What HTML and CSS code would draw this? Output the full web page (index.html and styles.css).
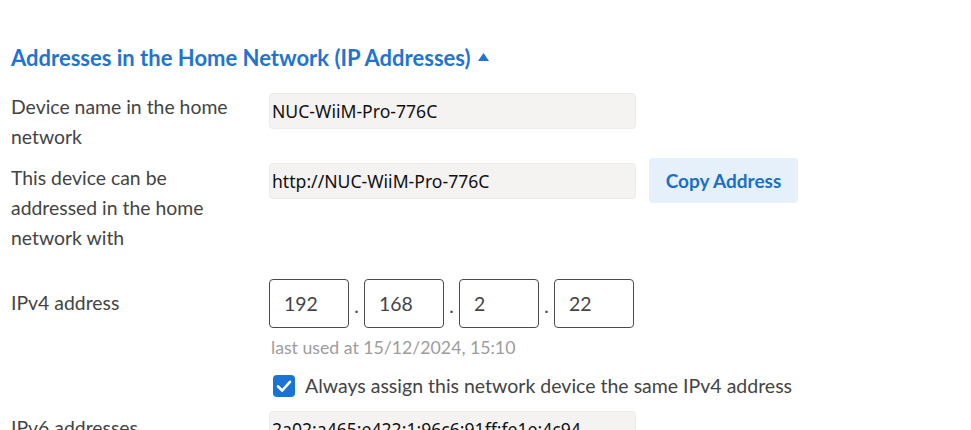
FILE: index.html
```html
<!DOCTYPE html>
<html lang="en">
<head>
<meta charset="utf-8">
<title>Addresses in the Home Network</title>
<link rel="stylesheet" href="styles.css">
</head>
<body>
<main class="page">
  <h2 class="section-title">Addresses in the Home Network (IP Addresses)<svg class="caret" width="11" height="8" viewBox="0 0 11 8"><path d="M0 8 L5.5 0 L11 8 Z" fill="#1f74cf"/></svg></h2>

  <div class="row row-name">
    <div class="label">Device name in the home network</div>
    <div class="field">
      <div class="text-input">NUC-WiiM-Pro-776C</div>
    </div>
  </div>

  <div class="row row-url">
    <div class="label">This device can be addressed in the home network with</div>
    <div class="field field-with-button">
      <div class="text-input">http://NUC-WiiM-Pro-776C</div>
      <button class="btn-secondary">Copy Address</button>
    </div>
  </div>

  <div class="row row-ipv4">
    <div class="label">IPv4 address</div>
    <div class="field">
      <div class="ip-group">
        <div class="ip-box">192</div><span class="ip-dot">.</span>
        <div class="ip-box">168</div><span class="ip-dot">.</span>
        <div class="ip-box">2</div><span class="ip-dot">.</span>
        <div class="ip-box">22</div>
      </div>
      <div class="hint">last used at 15/12/2024, 15:10</div>
      <label class="check">
        <span class="checkbox"><svg width="22" height="22" viewBox="0 0 22 22"><path d="M5 11.5 L9.2 15.5 L17 6.8" fill="none" stroke="#fff" stroke-width="2.6" stroke-linecap="round" stroke-linejoin="round"/></svg></span>
        <span class="check-text">Always assign this network device the same IPv4 address</span>
      </label>
    </div>
  </div>

  <div class="row row-ipv6">
    <div class="label">IPv6 addresses</div>
    <div class="field">
      <div class="text-input">2a02:a465:e422:1:96c6:91ff:fe1e:4c94</div>
    </div>
  </div>
</main>
</body>
</html>
```

FILE: styles.css
```css
html, body {
  margin: 0;
  padding: 0;
  background: #ffffff;
  overflow: hidden;
}

body {
  font-family: "Lato", "Noto Sans", sans-serif;
  color: #444444;
  height: 430px;
}

.page {
  padding: 0 0 0 11px;
}

.section-title {
  margin: 0;
  padding-top: 43px;
  height: 29px;
  font-size: 22px;
  line-height: 29px;
  font-weight: 700;
  color: #1f74cf;
  display: flex;
  align-items: center;
  gap: 7px;
}

.caret {
  margin-top: -2px;
}

.row {
  display: flex;
  align-items: flex-start;
}

.label {
  width: 258px;
  flex: none;
  font-size: 19.4px;
  line-height: 30px;
  color: #444444;
  padding-right: 20px;
  box-sizing: border-box;
}

.field {
  display: flex;
  flex-direction: column;
}

.text-input {
  width: 367px;
  height: 36px;
  box-sizing: border-box;
  background: #f4f3f1;
  border: 1px solid #ecebe8;
  border-radius: 4px;
  padding: 0 0 0 2px;
  font-family: "Noto Sans", "Open Sans", sans-serif;
  font-size: 17.6px;
  line-height: 34px;
  color: #111111;
  white-space: nowrap;
  overflow: hidden;
}

.row-name {
  margin-top: 20px;
}

.row-name .field {
  padding-top: 1px;
}

.row-url {
  margin-top: 6px;
}

.row-url .label {
  padding-top: 5px;
}

.field-with-button {
  flex-direction: row;
  align-items: center;
  gap: 13px;
}

.btn-secondary {
  height: 45px;
  width: 149px;
  border: none;
  border-radius: 4px;
  background: #e6f0fa;
  color: #1c6fc8;
  font-family: "Lato", "Noto Sans", sans-serif;
  font-size: 19px;
  font-weight: 700;
  padding: 0;
}

.row-ipv4 {
  margin-top: 25px;
}

.row-ipv4 .label {
  padding-top: 10px;
}

.ip-group {
  display: flex;
  align-items: center;
}

.ip-box {
  width: 80px;
  height: 49px;
  box-sizing: border-box;
  border: 1px solid #4b4b4b;
  border-radius: 4px;
  padding-left: 14px;
  font-size: 19.4px;
  line-height: 47px;
  color: #444444;
}

.ip-dot {
  width: 15px;
  text-align: center;
  font-size: 19px;
  line-height: 47px;
  color: #444444;
  padding-top: 4px;
}

.hint {
  margin-top: 6px;
  padding-left: 2px;
  font-size: 17.7px;
  line-height: 26px;
  color: #9d9d9d;
}

.check {
  display: flex;
  align-items: center;
  gap: 10px;
  margin-top: 12px;
  padding-left: 4px;
}

.checkbox {
  width: 22px;
  height: 22px;
  border-radius: 4px;
  background: #1b74d4;
  display: block;
}

.checkbox svg {
  display: block;
}

.check-text {
  font-size: 19.5px;
  line-height: 26px;
  color: #444444;
}

.row-ipv6 {
  margin-top: 12px;
}

.row-ipv6 .label {
  padding-top: 2px;
}
```
